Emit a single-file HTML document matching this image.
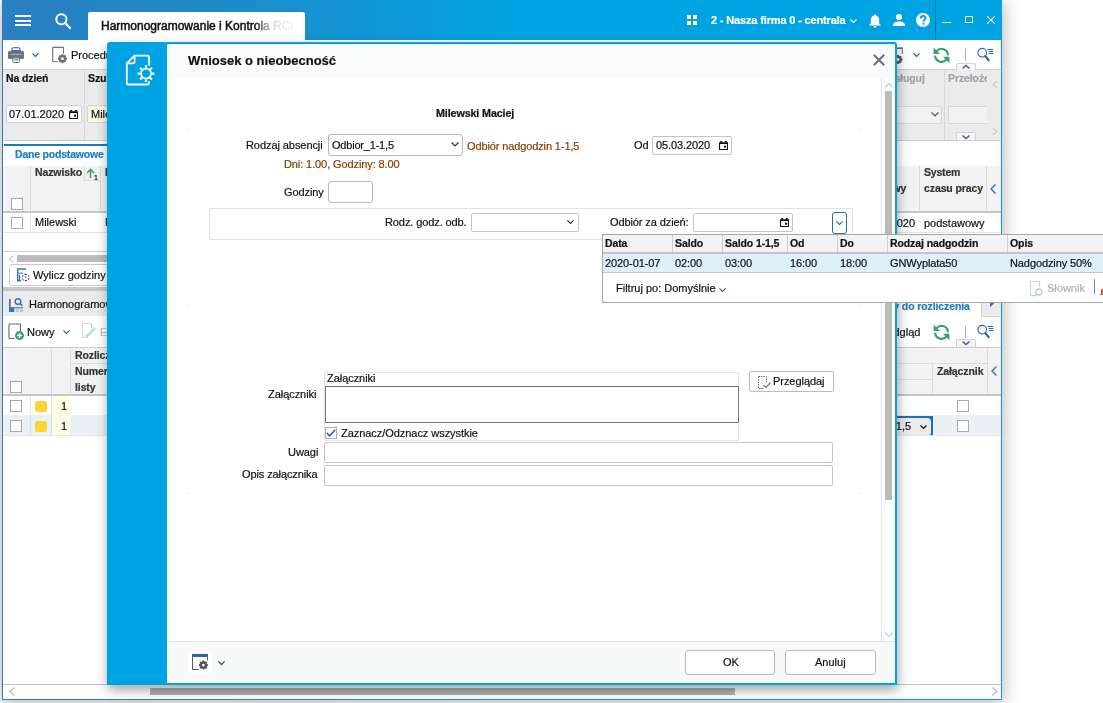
<!DOCTYPE html>
<html><head><meta charset="utf-8">
<style>
*{box-sizing:border-box;margin:0;padding:0}
html,body{width:1103px;height:703px;overflow:hidden;background:#fff;font-family:"Liberation Sans",sans-serif;font-size:11px;color:#222}
.a{position:absolute}
.t{position:absolute;white-space:nowrap;line-height:1;margin-top:-1px;will-change:transform;-webkit-text-stroke:0.2px currentColor}
.b{font-weight:bold}
.inp{position:absolute;background:#fff;border:1px solid #c9c9c9;border-radius:2px}
.chk{position:absolute;width:12px;height:12px;border:1px solid #a8a8a8;background:#fff}
svg{position:absolute;overflow:visible}
</style></head><body>

<!-- window shadow -->
<div class="a" style="left:2px;top:0;width:1000px;height:700px;box-shadow:0 2px 16px 1px rgba(0,0,0,0.30)"></div>

<!-- MAIN WINDOW -->
<div id="win" class="a" style="left:0;top:0;width:1002px;height:700px;overflow:hidden">
  <div class="a" style="left:2px;top:0;width:1000px;height:700px;background:#fff"></div>
  <!-- top bar -->
  <div class="a" style="left:2px;top:0;width:1000px;height:40px;background:linear-gradient(90deg,#2a7fc1 0px,#1d8ccc 250px,#00a3e2 520px,#00a3e2 1000px)"></div>

  <!-- hamburger -->
  <div class="a" style="left:15px;top:15px;width:16px;height:2px;background:#fff"></div>
  <div class="a" style="left:15px;top:19.5px;width:16px;height:2px;background:#fff"></div>
  <div class="a" style="left:15px;top:24px;width:16px;height:2px;background:#fff"></div>
  <!-- search -->
  <svg style="left:55px;top:13px" width="16" height="16" viewBox="0 0 16 16"><circle cx="6.4" cy="6.3" r="5.1" fill="none" stroke="#fff" stroke-width="2"/><line x1="10" y1="10" x2="15" y2="15" stroke="#fff" stroke-width="2.2" stroke-linecap="round"/></svg>
  <!-- tab -->
  <div class="a" style="left:88px;top:12px;width:217px;height:28px;background:#fff;border-radius:2px 2px 0 0"></div>
  <div class="a" style="left:88px;top:12px;width:205px;height:28px;overflow:hidden"><div class="t" style="left:12.5px;top:8.5px;font-size:12px;-webkit-text-stroke:0.5px #111;color:#111">Harmonogramowanie i Kontrola RCP</div><div class="a" style="left:168px;top:0;width:37px;height:28px;background:linear-gradient(90deg,rgba(255,255,255,0) 0px,rgba(255,255,255,0.6) 10px,rgba(255,255,255,0.88) 20px,rgba(255,255,255,0.96) 37px)"></div></div>
  <!-- grid icon -->
  <div class="a" style="left:686.5px;top:15px;width:4px;height:4px;background:#fff"></div>
  <div class="a" style="left:692.5px;top:15px;width:4px;height:4px;background:#fff"></div>
  <div class="a" style="left:686.5px;top:21px;width:4px;height:4px;background:#fff"></div>
  <div class="a" style="left:692.5px;top:21px;width:4px;height:4px;background:#fff"></div>
  <div class="t b" style="left:710.8px;top:16px;font-size:11px;letter-spacing:-0.15px;color:#fff">2 - Nasza firma 0 - centrala</div>
  <svg style="left:849.5px;top:19px" width="7" height="4" viewBox="0 0 7 4"><polyline points="0.5,0.5 3.5,3.5 6.5,0.5" fill="none" stroke="#fff" stroke-width="1.1"/></svg>
  <!-- bell -->
  <svg style="left:869px;top:13.5px" width="12" height="14" viewBox="0 0 12 14"><path d="M6 0.5c0.7 0 1 0.5 1 1 2.2 0.5 3.2 2.4 3.2 4.5v3.3l1.5 1.7v0.6H0.3v-0.6l1.5-1.7V6c0-2.1 1-4 3.2-4.5 0-0.5 0.3-1 1-1z M4.6 12h2.8c0 0.8-0.6 1.5-1.4 1.5s-1.4-0.7-1.4-1.5z" fill="#fff"/></svg>
  <!-- person -->
  <svg style="left:892px;top:14px" width="14" height="12" viewBox="0 0 14 12"><circle cx="7" cy="3" r="3.1" fill="#fff"/><path d="M0.8 12c0-3.2 2.8-4.6 6.2-4.6s6.2 1.4 6.2 4.6z" fill="#fff"/></svg>
  <!-- help -->
  <svg style="left:915.5px;top:13px" width="14" height="14" viewBox="0 0 14 14"><circle cx="7" cy="7" r="7" fill="#fff"/><path d="M4.7 5.4c0-1.4 1-2.4 2.4-2.4 1.4 0 2.4 0.9 2.4 2.1 0 1.6-1.9 1.7-1.9 3.3" fill="none" stroke="#00a3e2" stroke-width="2"/><rect x="6.5" y="9.6" width="2" height="1.9" fill="#00a3e2"/></svg>
  <div class="a" style="left:935px;top:0;width:1px;height:40px;background:#1577a8"></div>
  <div class="a" style="left:942px;top:21.5px;width:8.5px;height:1.2px;background:#fff"></div>
  <div class="a" style="left:965px;top:15.5px;width:8px;height:7.5px;border:1.2px solid #fff"></div>
  <svg style="left:987px;top:16px" width="8" height="8" viewBox="0 0 8 8"><path d="M0.3 0.3L7.7 7.7M7.7 0.3L0.3 7.7" stroke="#fff" stroke-width="1.1"/></svg>
    <!-- ===== toolbar 1 ===== -->
  <svg style="left:8px;top:47px" width="16" height="16" viewBox="0 0 16 16"><path d="M4 3.8V2.6Q4 0.6 6.2 0.6H9.8Q12 0.6 12 2.6V3.8" fill="none" stroke="#747474" stroke-width="1.2"/><rect x="0" y="4" width="16" height="8" rx="1.5" fill="#747474"/><rect x="3.2" y="3" width="9.8" height="3.8" fill="#4677bd"/><rect x="3.2" y="6.8" width="9.8" height="0.9" fill="#b4c6de"/><rect x="4.8" y="10.9" width="6.6" height="4.6" rx="0.8" fill="#fff" stroke="#747474" stroke-width="1"/><rect x="6" y="12.2" width="4.5" height="1" fill="#4a7fc0"/><rect x="6" y="13.6" width="4.5" height="0.7" fill="#b9cde6"/></svg>
  <svg style="left:32px;top:53px" width="7" height="4" viewBox="0 0 7 4"><polyline points="0.4,0.4 3.5,3.5 6.6,0.4" fill="none" stroke="#2b62a6" stroke-width="1.2"/></svg>
  <svg style="left:52px;top:47px" width="16" height="17" viewBox="0 0 16 17"><path d="M5.8 14.7H1.2Q0.7 14.7 0.7 14.2V0.9Q0.7 0.4 1.2 0.4H11Q11.5 0.4 11.5 0.9V6.4" fill="none" stroke="#707070" stroke-width="1.1"/><path d="M13.59 10.41 L14.95 10.74 L14.95 12.66 L13.59 12.99 L13.59 13.01 L14.31 14.20 L12.95 15.56 L11.76 14.84 L11.74 14.84 L11.41 16.20 L9.49 16.20 L9.16 14.84 L9.14 14.84 L7.95 15.56 L6.59 14.20 L7.31 13.01 L7.31 12.99 L5.95 12.66 L5.95 10.74 L7.31 10.41 L7.31 10.39 L6.59 9.20 L7.95 7.84 L9.14 8.56 L9.16 8.56 L9.49 7.20 L11.41 7.20 L11.74 8.56 L11.76 8.56 L12.95 7.84 L14.31 9.20 L13.59 10.39Z M9.05 11.70 a1.40 1.40 0 1 0 2.80 0 a1.40 1.40 0 1 0 -2.80 0Z" fill="#707070" fill-rule="evenodd"/></svg>
  <div class="t" style="left:71px;top:51px;font-size:11px;color:#111">Procedury</div>
  <!-- filter panel -->
  <div class="a" style="left:3px;top:69px;width:998px;height:72px;background:#ebebeb;border-top:1px solid #cfcfcf;border-bottom:1px solid #cdcdcd"></div>
  <div class="a" style="left:84px;top:70px;width:1px;height:70px;background:#d8d8d8"></div>
  <div class="t b" style="left:6px;top:74px;font-size:10.5px;letter-spacing:-0.1px;color:#111">Na dzień</div>
  <div class="t b" style="left:88px;top:74px;font-size:10.5px;letter-spacing:-0.1px;color:#111">Szukaj</div>
  <div class="inp" style="left:6px;top:105px;width:76px;height:18px;border-color:#cdcdcd"></div>
  <div class="t" style="left:9px;top:110px;font-size:11px;color:#111">07.01.2020</div>
  <svg style="left:69px;top:110px" width="10" height="9" viewBox="0 0 10 9"><path d="M0 1.2H9V9H0z M1.1 3V7.9H7.9V3z" fill="#111" fill-rule="evenodd"/><rect x="1.2" y="0" width="2" height="1.5" fill="#111"/><rect x="5.8" y="0" width="2" height="1.5" fill="#111"/><rect x="5" y="4.7" width="2" height="2" fill="#111"/></svg>
  <div class="inp" style="left:87px;top:105px;width:100px;height:18px;background:#fbf8e4;border-color:#d6d3c0"></div>
  <div class="t" style="left:91px;top:110px;font-size:11px;color:#111">Milewski</div>
  <!-- tab strip -->
  <div class="a" style="left:4px;top:144px;width:140px;height:2px;background:#1d7cc0"></div>
  <div class="t b" style="left:15px;top:150px;font-size:10.5px;letter-spacing:-0.2px;color:#1b7dc2">Dane podstawowe</div>
  <!-- grid1 header -->
  <div class="a" style="left:3px;top:165.5px;width:998px;height:47.5px;background:#f2f2f2;border-bottom:2px solid #c6c6c6"></div>
  <div class="a" style="left:30px;top:166px;width:1px;height:44px;background:#dcdcdc"></div>
  <div class="a" style="left:100px;top:166px;width:1px;height:44px;background:#dcdcdc"></div>
  <div class="chk" style="left:11px;top:198px"></div>
  <div class="t b" style="left:35px;top:168px;font-size:10.5px;letter-spacing:-0.1px;color:#333">Nazwisko</div>
  <div class="a" style="left:84px;top:166px;width:16px;height:15px;border-left:1px solid #dcdcdc;border-bottom:1px solid #dcdcdc"></div>
  <svg style="left:86px;top:168px" width="10" height="11" viewBox="0 0 10 11"><path d="M4.5 10V1.5M1 5L4.5 1.5 8 5" fill="none" stroke="#3aa76d" stroke-width="1.6"/></svg>
  <div class="t" style="left:94px;top:175px;font-size:7px;color:#111">1</div>
  <div class="t b" style="left:105px;top:168px;font-size:10.5px;letter-spacing:-0.1px;color:#333">Imię</div>
  <!-- grid1 row -->
  <div class="a" style="left:3px;top:232px;width:998px;height:1px;background:#dfe5ea"></div>
  <div class="a" style="left:29.5px;top:213px;width:1px;height:19px;background:#d9e6f2"></div>
  <div class="chk" style="left:11px;top:217px"></div>
  <div class="t" style="left:35px;top:218px;font-size:11px;color:#111">Milewski</div>
  <div class="t" style="left:105px;top:218px;font-size:11px;color:#111">Maciej</div>
  <!-- scroll 1 -->
  <div class="a" style="left:3px;top:251px;width:998px;height:1px;background:#cdcdcd"></div>
  <svg style="left:8px;top:255px" width="6" height="8" viewBox="0 0 6 8"><polyline points="5.5,0.5 1,4 5.5,7.5" fill="none" stroke="#bdbdbd" stroke-width="1"/></svg>
  <div class="a" style="left:17px;top:255px;width:200px;height:7px;background:#bcbcbc"></div>
  <!-- button wylicz -->
  <div class="inp" style="left:9px;top:264px;width:150px;height:21.5px;border-color:#c9c9c9;border-radius:3px"></div>
  <svg style="left:16px;top:267.5px" width="14" height="14" viewBox="0 0 14 14"><path d="M1 1H10M1.7 1V12.7H5" stroke="#3a74b8" stroke-width="1.4" fill="none"/><rect x="1" y="4.6" width="6" height="1.2" fill="#3a74b8"/><rect x="2.9" y="6.8" width="1.3" height="5.9" fill="#3a74b8"/><rect x="2.9" y="5.6" width="1.3" height="0.6" fill="#fff"/><rect x="6.6" y="6.4" width="6.2" height="6.2" rx="2" fill="#fff" stroke="#333" stroke-width="1" stroke-dasharray="2.2 1.1"/><rect x="9.2" y="8" width="1" height="2.2" fill="#3a74b8"/></svg>
  <div class="t" style="left:32.5px;top:271px;font-size:11px;color:#111">Wylicz godziny</div>
  <!-- splitter -->
  <div class="a" style="left:3px;top:287px;width:998px;height:4px;background:#c8c8c8"></div>
  <!-- section 2 header -->
  <div class="a" style="left:3px;top:291px;width:998px;height:25px;background:#ebebeb"></div>
  <svg style="left:8px;top:298px" width="16" height="15" viewBox="0 0 16 15"><rect x="1" y="1" width="1.7" height="13" fill="#3a74b8"/><rect x="1" y="9.2" width="14" height="1.1" fill="#3a74b8"/><rect x="1" y="10" width="5.3" height="4" fill="#3a74b8"/><circle cx="10" cy="3.6" r="2.8" fill="none" stroke="#3a74b8" stroke-width="1.5"/><path d="M12 5.6L14.3 7.6" stroke="#3a74b8" stroke-width="1.8"/><rect x="8" y="11" width="3" height="3" fill="#c4c4c4"/><rect x="12" y="11" width="3" height="3" fill="#c4c4c4"/></svg>
  <div class="t" style="left:28.7px;top:299.5px;font-size:11px;color:#111">Harmonogramowanie</div>
  <!-- toolbar 2 -->
  <svg style="left:8px;top:323px" width="17" height="18" viewBox="0 0 17 18"><path d="M6.5 15.5H1.5Q1 15.5 1 15V1.5Q1 1 1.5 1H12Q12.5 1 12.5 1.5V8" fill="none" stroke="#666" stroke-width="1.1"/><circle cx="11.5" cy="12.6" r="4.5" fill="#3d9f6f"/><path d="M11.5 10.2V15M9.1 12.6H13.9" stroke="#fff" stroke-width="1.5"/></svg>
  <div class="t" style="left:26.5px;top:327.5px;font-size:11px;color:#111">Nowy</div>
  <svg style="left:63px;top:330px" width="7" height="4" viewBox="0 0 7 4"><polyline points="0.4,0.4 3.5,3.5 6.6,0.4" fill="none" stroke="#2b62a6" stroke-width="1.2"/></svg>
  <svg style="left:82px;top:323px" width="15" height="16" viewBox="0 0 15 16"><path d="M6 14.5H0.5V0.5H9.5V5" fill="none" stroke="#d6d6d6" stroke-width="1"/><path d="M4 14L13 5" stroke="#c5d7ea" stroke-width="2.6"/></svg>
  <div class="t" style="left:100px;top:327.5px;font-size:11px;color:#bdbdbd">Edytuj</div>
  <!-- grid2 header -->
  <div class="a" style="left:3px;top:347px;width:998px;height:49px;background:#f2f2f2;border-top:1px solid #cdcdcd;border-bottom:2px solid #c6c6c6"></div>
  <div class="a" style="left:51px;top:348px;width:1px;height:46px;background:#dcdcdc"></div>
  <div class="a" style="left:70px;top:348px;width:1px;height:46px;background:#dcdcdc"></div>
  <div class="a" style="left:71px;top:363px;width:916px;height:1px;background:#dcdcdc"></div>
  <div class="a" style="left:800px;top:379px;width:132px;height:1px;background:#dcdcdc"></div>
  <div class="chk" style="left:10px;top:381px"></div>
  <div class="t b" style="left:75px;top:351px;font-size:10.5px;letter-spacing:-0.1px;color:#333">Rozliczenie</div>
  <div class="t b" style="left:75px;top:367px;font-size:10.5px;letter-spacing:-0.1px;color:#333">Numer</div>
  <div class="t b" style="left:75px;top:383px;font-size:10.5px;letter-spacing:-0.1px;color:#333">listy</div>
  <!-- grid2 rows -->
  <div class="a" style="left:3px;top:415px;width:998px;height:20px;background:#e9f0f6"></div>
  <div class="a" style="left:52px;top:396px;width:19px;height:39px;background:#fdfce4"></div>
  <div class="a" style="left:29.5px;top:396px;width:1px;height:39px;background:#d9e6f2"></div>
  <div class="a" style="left:51px;top:396px;width:1px;height:39px;background:#d9e6f2"></div>
  <div class="a" style="left:3px;top:435px;width:998px;height:1px;background:#e6e6e6"></div>
  <div class="chk" style="left:10px;top:400px"></div>
  <div class="chk" style="left:10px;top:420px"></div>
  <div class="a" style="left:35px;top:401px;width:12px;height:11px;background:#fdd435;border-radius:2px"></div>
  <div class="a" style="left:35px;top:421px;width:12px;height:11px;background:#fdd435;border-radius:2px"></div>
  <div class="t" style="left:61px;top:401.5px;font-size:11px;color:#111">1</div>
  <div class="t" style="left:61px;top:421.5px;font-size:11px;color:#111">1</div>
  <!-- bottom scroll -->
  <div class="a" style="left:3px;top:684px;width:998px;height:1px;background:#c2c2c2"></div>
  <svg style="left:9px;top:687px" width="6" height="9" viewBox="0 0 6 9"><polyline points="5.5,0.5 1,4.5 5.5,8.5" fill="none" stroke="#bdbdbd" stroke-width="1.3"/></svg>
  <div class="a" style="left:150px;top:688px;width:585px;height:7px;background:#b2b2b2"></div>
  <svg style="left:992px;top:687px" width="6" height="9" viewBox="0 0 6 9"><polyline points="0.5,0.5 5,4.5 0.5,8.5" fill="none" stroke="#bdbdbd" stroke-width="1.3"/></svg>
    <!-- ===== right portion ===== -->
  <svg style="left:893px;top:47px" width="11" height="17" viewBox="0 0 11 17"><path d="M0 1.2H9.7" fill="none" stroke="#3a6fb5" stroke-width="1.6"/><path d="M9.3 1.5V7" stroke="#707070" stroke-width="1.1"/><path d="M8.14 11.21 L9.50 11.54 L9.50 13.46 L8.14 13.79 L8.14 13.81 L8.86 15.00 L7.50 16.36 L6.31 15.64 L6.29 15.64 L5.96 17.00 L4.04 17.00 L3.71 15.64 L3.69 15.64 L2.50 16.36 L1.14 15.00 L1.86 13.81 L1.86 13.79 L0.50 13.46 L0.50 11.54 L1.86 11.21 L1.86 11.19 L1.14 10.00 L2.50 8.64 L3.69 9.36 L3.71 9.36 L4.04 8.00 L5.96 8.00 L6.29 9.36 L6.31 9.36 L7.50 8.64 L8.86 10.00 L8.14 11.19Z M3.60 12.50 a1.40 1.40 0 1 0 2.80 0 a1.40 1.40 0 1 0 -2.80 0Z" fill="#5a5a5a" fill-rule="evenodd"/></svg>
  <svg style="left:913px;top:53px" width="7" height="4" viewBox="0 0 7 4"><polyline points="0.4,0.4 3.5,3.5 6.6,0.4" fill="none" stroke="#2b62a6" stroke-width="1.2"/></svg>
  <svg style="left:932.5px;top:46.5px" width="17" height="17" viewBox="0 0 17 17"><path d="M3.6 4.1A6.4 6.4 0 0 1 14.9 8.4" fill="none" stroke="#36a26a" stroke-width="2.1"/><path d="M2.1 8.6A6.4 6.4 0 0 0 13.4 12.5" fill="none" stroke="#36a26a" stroke-width="2.1"/><path d="M0.6 0.6V7H7z" fill="#36a26a"/><path d="M16.4 16.2V9.8H10z" fill="#36a26a"/></svg>
  <div class="a" style="left:965px;top:49px;width:1px;height:12px;background:#adadad"></div>
  <svg style="left:977px;top:48px" width="17" height="15" viewBox="0 0 17 15"><circle cx="5.2" cy="4.7" r="4.3" fill="none" stroke="#2f67ad" stroke-width="1.1"/><path d="M8.4 8.1L11.6 12.1" stroke="#2f67ad" stroke-width="2.3" stroke-linecap="round"/><path d="M10.3 1.5H16.3M11.6 3.5H16.3M11.8 5.5H16.3" stroke="#2f67ad" stroke-width="1"/></svg>
  <div class="a" style="left:956px;top:62.5px;width:20px;height:7px;background:#f7f7f7;border:1px solid #d2d2d2;border-bottom:none;border-radius:2px 2px 0 0"></div>
  <svg style="left:962px;top:64.5px" width="8" height="4" viewBox="0 0 8 4"><polyline points="0.5,3.5 4,0.5 7.5,3.5" fill="none" stroke="#2b62a6" stroke-width="1.5"/></svg>
  <!-- panel right -->
  <div class="t b" style="left:880px;top:74px;font-size:10.5px;letter-spacing:-0.1px;color:#a4a4a4">Obsługuj</div>
  <div class="a" style="left:944px;top:70px;width:1px;height:70px;background:#d8d8d8"></div>
  <div class="a" style="left:988px;top:70px;width:13px;height:70px;background:#ebebeb"></div>
  <div class="t b" style="left:948px;top:74px;font-size:10.5px;letter-spacing:-0.1px;color:#a4a4a4">Przełożony</div>
  <div class="a" style="left:987px;top:70px;width:14px;height:70px;background:#ebebeb"></div>
  <svg style="left:992px;top:80.5px" width="6" height="7" viewBox="0 0 6 7"><polyline points="5.2,0.3 0.8,3.5 5.2,6.7" fill="none" stroke="#bdbdbd" stroke-width="1"/></svg>
  <svg style="left:992px;top:128px" width="6" height="7" viewBox="0 0 6 7"><polyline points="0.8,0.3 5.2,3.5 0.8,6.7" fill="none" stroke="#bdbdbd" stroke-width="1"/></svg>
  <div class="inp" style="left:860px;top:105.5px;width:81.5px;height:18px;background:#f2f2f2;border-color:#d6d6d6"></div>
  <svg style="left:931px;top:112px" width="8" height="5" viewBox="0 0 8 5"><polyline points="0.5,0.5 4,4 7.5,0.5" fill="none" stroke="#555" stroke-width="1.1"/></svg>
  <div class="a" style="left:947.5px;top:105.5px;width:39px;height:18px;background:#f2f2f2;border:1px solid #d6d6d6;border-right:none;border-radius:2px 0 0 2px"></div>
  <div class="a" style="left:956px;top:132px;width:20px;height:8px;background:#f7f7f7;border:1px solid #d2d2d2;border-bottom:none;border-radius:2px 2px 0 0"></div>
  <svg style="left:962px;top:134.5px" width="8" height="4" viewBox="0 0 8 4"><polyline points="0.5,0.5 4,3.5 7.5,0.5" fill="none" stroke="#2b62a6" stroke-width="1.5"/></svg>
  <!-- grid1 header right -->
  <div class="a" style="left:919px;top:166px;width:1px;height:44px;background:#dcdcdc"></div>
  <div class="a" style="left:986px;top:166px;width:1px;height:44px;background:#dcdcdc"></div>
  <div class="t b" style="left:841px;top:184px;font-size:10.5px;letter-spacing:-0.1px;color:#333">Czas etatowy</div>
  <div class="t b" style="left:924px;top:168px;font-size:10.5px;letter-spacing:-0.2px;color:#333">System</div>
  <div class="t b" style="left:924px;top:184px;font-size:10.5px;letter-spacing:-0.1px;color:#333">czasu pracy</div>
  <svg style="left:990px;top:184px" width="6" height="10" viewBox="0 0 6 10"><polyline points="5.5,0.5 1,5 5.5,9.5" fill="none" stroke="#2f6fb5" stroke-width="1.3"/></svg>
  <div class="t" style="left:860px;top:218.5px;font-size:11px;color:#111">07.01.2020</div>
  <div class="t" style="left:924px;top:218.5px;font-size:11px;color:#111">podstawowy</div>
  <!-- section 2 right -->
  <div class="a" style="left:880px;top:296px;width:101px;height:20px;background:#fff"></div>
  <div class="t b" style="left:875px;top:302px;font-size:10.5px;letter-spacing:-0.1px;color:#1b7dc2">Listy do rozliczenia</div>
  <div class="a" style="left:981px;top:291px;width:20px;height:26px;background:#ebebeb;border-left:1px solid #cfcfcf;border-bottom:1px solid #d6d6d6"></div>
  <svg style="left:990px;top:303px" width="5" height="5" viewBox="0 0 5 5"><path d="M0 0H4.3L0 4.3z" fill="#3a6aa8"/></svg>
  <div class="t" style="left:879.5px;top:327.5px;font-size:11px;color:#111">Podgląd</div>
  <svg style="left:932.5px;top:323.5px" width="17" height="17" viewBox="0 0 17 17"><path d="M3.6 4.1A6.4 6.4 0 0 1 14.9 8.4" fill="none" stroke="#36a26a" stroke-width="2.1"/><path d="M2.1 8.6A6.4 6.4 0 0 0 13.4 12.5" fill="none" stroke="#36a26a" stroke-width="2.1"/><path d="M0.6 0.6V7H7z" fill="#36a26a"/><path d="M16.4 16.2V9.8H10z" fill="#36a26a"/></svg>
  <div class="a" style="left:965px;top:326px;width:1px;height:12px;background:#adadad"></div>
  <svg style="left:977px;top:325px" width="17" height="15" viewBox="0 0 17 15"><circle cx="5.2" cy="4.7" r="4.3" fill="none" stroke="#2f67ad" stroke-width="1.1"/><path d="M8.4 8.1L11.6 12.1" stroke="#2f67ad" stroke-width="2.3" stroke-linecap="round"/><path d="M10.3 1.5H16.3M11.6 3.5H16.3M11.8 5.5H16.3" stroke="#2f67ad" stroke-width="1"/></svg>
  <div class="a" style="left:956px;top:339px;width:20px;height:8px;background:#f3f3f3;border:1px solid #d2d2d2;border-bottom:none;border-radius:2px 2px 0 0"></div>
  <svg style="left:962px;top:341px" width="8" height="4" viewBox="0 0 8 4"><polyline points="0.5,0.5 4,3.5 7.5,0.5" fill="none" stroke="#2b62a6" stroke-width="1.5"/></svg>
  <!-- grid2 header right -->
  <div class="a" style="left:932px;top:364px;width:1px;height:30px;background:#dcdcdc"></div>
  <div class="a" style="left:987px;top:348px;width:1px;height:46px;background:#dcdcdc"></div>
  <div class="t b" style="left:937px;top:367px;font-size:10.5px;letter-spacing:-0.1px;color:#333">Załącznik</div>
  <svg style="left:991px;top:366px" width="6" height="10" viewBox="0 0 6 10"><polyline points="5.5,0.5 1,5 5.5,9.5" fill="none" stroke="#2f6fb5" stroke-width="1.3"/></svg>
  <div class="chk" style="left:957px;top:400px"></div>
  <div class="chk" style="left:957px;top:420px"></div>
  <div class="a" style="left:860px;top:416px;width:73px;height:19px;background:#1a73b8"></div><div class="a" style="left:860px;top:418px;width:71px;height:17px;background:#ebebeb;border-radius:0 4px 2px 0"></div>
  <div class="t" style="left:886px;top:421.5px;font-size:11px;color:#111">1-1,5</div>
  <svg style="left:920px;top:424.5px" width="7" height="4" viewBox="0 0 7 4"><polyline points="0.5,0.5 3.5,3.2 6.5,0.5" fill="none" stroke="#222" stroke-width="1.4"/></svg>

</div>

<!-- window borders -->
<div class="a" style="left:2px;top:40px;width:1px;height:660px;background:#2a7fc1"></div>
<div class="a" style="left:1001px;top:40px;width:1px;height:660px;background:#00a3e2"></div>
<div class="a" style="left:2px;top:699px;width:1000px;height:1px;background:linear-gradient(90deg,#2a7fc1 0px,#1d8ccc 250px,#00a3e2 520px,#00a3e2 1000px)"></div>

<!-- DIALOG -->
<div class="a" style="left:107px;top:42px;width:790px;height:643px;background:#00a3e2;border-radius:3px 3px 0 0;box-shadow:1px 5px 12px rgba(0,0,0,0.36)"></div>
<div class="a" style="left:167px;top:44px;width:728px;height:639px;background:#fff;border-radius:2px 2px 1px 1px;overflow:hidden">
  <div class="a" style="left:0;top:0;width:728px;height:34px;background:#f9fafa"></div>
  <div class="a" style="left:0;top:597px;width:728px;height:42px;background:#f8f9f9;border-top:1px solid #e3e5e5"></div>
</div>
<!-- dialog icon -->
<svg style="left:125px;top:54px" width="32" height="32" viewBox="0 0 32 32"><path d="M24 11.5V3.4Q24 1.6 22.2 1.6H9.6L1.8 9.3V28.8Q1.8 30.5 3.5 30.5H22.3Q24 30.5 24 28.8V27.2" fill="none" stroke="#fff" stroke-width="1.8"/><path d="M9.6 1.6V7.6Q9.6 9.3 7.9 9.3H1.8" fill="none" stroke="#fff" stroke-width="1.8"/><circle cx="21.0" cy="19.6" r="5" fill="none" stroke="#fff" stroke-width="1.9"/><path d="M26.90 19.60L29.40 19.60M25.17 23.77L26.94 25.54M21.00 25.50L21.00 28.00M16.83 23.77L15.06 25.54M15.10 19.60L12.60 19.60M16.83 15.43L15.06 13.66M21.00 13.70L21.00 11.20M25.17 15.43L26.94 13.66" stroke="#fff" stroke-width="2.2"/></svg>
<div class="t b" style="left:187.5px;top:55px;font-size:13px;letter-spacing:0px;color:#111">Wniosek o nieobecność</div>
<svg style="left:873px;top:54px" width="12" height="12" viewBox="0 0 12 12"><path d="M0.8 0.8L11.2 11.2M11.2 0.8L0.8 11.2" stroke="#707070" stroke-width="2"/></svg>
<!-- scrollbar -->
<div class="a" style="left:881px;top:78px;width:1px;height:563px;background:#e4e4e4"></div>
<svg style="left:885px;top:83px" width="8" height="5" viewBox="0 0 8 5"><polyline points="0.3,4.3 4,0.6 7.7,4.3" fill="none" stroke="#c3c3c3" stroke-width="1.1"/></svg>
<div class="a" style="left:885px;top:91px;width:7px;height:409px;background:#bababa"></div>
<svg style="left:885px;top:632px" width="8" height="5" viewBox="0 0 8 5"><polyline points="0.3,0.6 4,4.3 7.7,0.6" fill="none" stroke="#c3c3c3" stroke-width="1.1"/></svg>
<!-- dots -->
<div class="a" style="left:187px;top:129px;width:1px;height:1px;background:#ccc"></div>
<div class="a" style="left:860px;top:129px;width:1px;height:1px;background:#ccc"></div>
<div class="a" style="left:187px;top:493px;width:1px;height:1px;background:#ccc"></div>
<div class="a" style="left:187px;top:305px;width:1px;height:1px;background:#ddd"></div>
<div class="a" style="left:860px;top:305px;width:1px;height:1px;background:#ddd"></div>
<div class="a" style="left:860px;top:493px;width:1px;height:1px;background:#ccc"></div>
<!-- form -->
<div class="t b" style="left:436px;top:109px;font-size:10.8px;letter-spacing:-0.15px;color:#111">Milewski Maciej</div>
<div class="t" style="left:246.3px;top:141px;font-size:11px;letter-spacing:-0.07px;color:#111">Rodzaj absencji</div>
<div class="inp" style="left:328px;top:134px;width:135px;height:22px;border-color:#b9b9b9;border-radius:3px"></div>
<div class="t" style="left:332px;top:141px;font-size:11px;letter-spacing:-0.2px;color:#111">Odbior_1-1,5</div>
<svg style="left:451px;top:142px" width="8" height="5" viewBox="0 0 8 5"><polyline points="0.5,0.5 4,4 7.5,0.5" fill="none" stroke="#333" stroke-width="1.2"/></svg>
<div class="t" style="left:467.4px;top:141.5px;font-size:11px;letter-spacing:-0.12px;color:#804000">Odbiór nadgodzin 1-1,5</div>
<div class="t" style="left:633.5px;top:140.7px;font-size:11px;color:#111">Od</div>
<div class="inp" style="left:652px;top:136px;width:80px;height:19px;border-color:#c4c4c4;border-radius:2px"></div>
<div class="t" style="left:656px;top:140.5px;font-size:11px;letter-spacing:-0.1px;color:#111">05.03.2020</div>
<svg style="left:719px;top:141px" width="10" height="9" viewBox="0 0 10 9"><path d="M0 1.2H9V9H0z M1.1 3V7.9H7.9V3z" fill="#111" fill-rule="evenodd"/><rect x="1.2" y="0" width="2" height="1.5" fill="#111"/><rect x="5.8" y="0" width="2" height="1.5" fill="#111"/><rect x="5" y="4.7" width="2" height="2" fill="#111"/></svg>
<div class="t" style="left:284.4px;top:159.5px;font-size:11px;letter-spacing:-0.1px;color:#804000">Dni: 1.00, Godziny: 8.00</div>
<div class="t" style="left:283.7px;top:187.5px;font-size:11px;letter-spacing:-0.1px;color:#111">Godziny</div>
<div class="inp" style="left:328px;top:181px;width:45px;height:21.5px;border-color:#b9b9b9;border-radius:3px"></div>
<!-- box -->
<div class="a" style="left:209px;top:208px;width:644px;height:32px;border:1px solid #e2e2e2"></div>
<div class="t" style="left:385px;top:218px;font-size:11px;letter-spacing:-0.1px;color:#111">Rodz. godz. odb.</div>
<div class="inp" style="left:471px;top:213px;width:108px;height:18.5px;border-color:#c4c4c4;border-radius:2px"></div>
<svg style="left:567px;top:220px" width="7" height="4" viewBox="0 0 7 4"><polyline points="0.4,0.4 3.5,3.5 6.6,0.4" fill="none" stroke="#333" stroke-width="1.2"/></svg>
<div class="t" style="left:610px;top:218px;font-size:11px;letter-spacing:-0.1px;color:#111">Odbiór za dzień:</div>
<div class="inp" style="left:693px;top:213px;width:100px;height:18.5px;border-color:#c4c4c4;border-radius:2px"></div>
<svg style="left:780px;top:217.5px" width="10" height="9" viewBox="0 0 10 9"><path d="M0 1.2H9V9H0z M1.1 3V7.9H7.9V3z" fill="#111" fill-rule="evenodd"/><rect x="1.2" y="0" width="2" height="1.5" fill="#111"/><rect x="5.8" y="0" width="2" height="1.5" fill="#111"/><rect x="5" y="4.7" width="2" height="2" fill="#111"/></svg>
<div class="a" style="left:832px;top:212px;width:15px;height:22px;border:1.5px solid #1f6db0;border-radius:3px;background:#fff"></div>
<svg style="left:836px;top:221px" width="7" height="4" viewBox="0 0 7 4"><polyline points="0.4,0.4 3.5,3.5 6.6,0.4" fill="none" stroke="#1f6db0" stroke-width="1.1"/></svg>
<!-- attachments -->
<div class="t" style="left:268.3px;top:389.5px;font-size:11px;letter-spacing:-0.05px;color:#111">Załączniki</div>
<div class="a" style="left:324px;top:371.5px;width:415px;height:69px;border:1px solid #e4e4e4"></div>
<div class="t" style="left:327px;top:374px;font-size:11px;letter-spacing:-0.05px;color:#111">Załączniki</div>
<div class="a" style="left:324.5px;top:385.5px;width:414px;height:37.5px;border:1.5px solid #777;background:#fff"></div>
<div class="a" style="left:325px;top:427px;width:12px;height:12px;border:1px solid #b0b0b0;background:#fff"></div>
<svg style="left:326px;top:429px" width="10" height="8" viewBox="0 0 10 8"><polyline points="0.8,4 3.5,6.8 9.3,0.8" fill="none" stroke="#2a5fa5" stroke-width="1.5"/></svg>
<div class="t" style="left:341px;top:429px;font-size:11px;letter-spacing:-0.05px;color:#111">Zaznacz/Odznacz wszystkie</div>
<div class="a" style="left:749px;top:371px;width:84.5px;height:20.5px;border:1px solid #bdbdbd;border-radius:2px;background:#fff"></div>
<svg style="left:758px;top:376px" width="13" height="13" viewBox="0 0 13 13"><path d="M0.5 0.5H8.5V6M0.5 0.5V12.5H5" fill="none" stroke="#666" stroke-width="1" stroke-dasharray="1.5 1"/><polyline points="5.5,9 8,11.5 12.5,6.5" fill="none" stroke="#3aa76d" stroke-width="1.3"/></svg>
<div class="t" style="left:773px;top:376.5px;font-size:11px;letter-spacing:-0.05px;color:#111">Przeglądaj</div>
<div class="t" style="left:287.9px;top:448px;font-size:11px;letter-spacing:-0.05px;color:#111">Uwagi</div>
<div class="inp" style="left:323.5px;top:441.5px;width:509px;height:21px;border-color:#c4c4c4;border-radius:2px"></div>
<div class="t" style="left:241.7px;top:470px;font-size:11px;letter-spacing:-0.1px;color:#111">Opis załącznika</div>
<div class="inp" style="left:323.5px;top:464.6px;width:509px;height:21.2px;border-color:#c4c4c4;border-radius:2px"></div>
<!-- footer -->
<div class="a" style="left:188px;top:652.5px;width:24px;height:20px;background:#fff;border-radius:3px"></div><svg style="left:191px;top:654px" width="18" height="17" viewBox="0 0 18 17"><rect x="1" y="0" width="16" height="3" fill="#2f62ad"/><path d="M1.5 3V15.5H7.7" fill="none" stroke="#5a5a5a" stroke-width="1"/><path d="M16.5 3V6.2" stroke="#5a5a5a" stroke-width="1"/><path d="M15.54 9.81 L16.90 10.14 L16.90 12.06 L15.54 12.39 L15.54 12.41 L16.26 13.60 L14.90 14.96 L13.71 14.24 L13.69 14.24 L13.36 15.60 L11.44 15.60 L11.11 14.24 L11.09 14.24 L9.90 14.96 L8.54 13.60 L9.26 12.41 L9.26 12.39 L7.90 12.06 L7.90 10.14 L9.26 9.81 L9.26 9.79 L8.54 8.60 L9.90 7.24 L11.09 7.96 L11.11 7.96 L11.44 6.60 L13.36 6.60 L13.69 7.96 L13.71 7.96 L14.90 7.24 L16.26 8.60 L15.54 9.79Z M11.00 11.10 a1.40 1.40 0 1 0 2.80 0 a1.40 1.40 0 1 0 -2.80 0Z" fill="#555" fill-rule="evenodd"/></svg>
<svg style="left:218px;top:661px" width="7" height="4" viewBox="0 0 7 4"><polyline points="0.4,0.4 3.5,3.5 6.6,0.4" fill="none" stroke="#2a5595" stroke-width="1.3"/></svg>
<div class="a" style="left:685px;top:650px;width:90px;height:25px;border:1px solid #b9b9b9;border-radius:3px;background:#fff"></div>
<div class="t" style="left:722.5px;top:657.5px;font-size:11px;color:#111">OK</div>
<div class="a" style="left:785px;top:650px;width:90.5px;height:25px;border:1px solid #b9b9b9;border-radius:3px;background:#fff"></div>
<div class="t" style="left:814.5px;top:657.5px;font-size:11px;color:#111">Anuluj</div>
<!-- POPUP -->
<div class="a" style="left:602px;top:234px;width:510px;height:69px;background:#fff;border:1px solid #a8a8a8"></div>
<div class="a" style="left:603px;top:235px;width:510px;height:19px;background:#f3f3f3;border-bottom:2px solid #c4c4c4"></div>
<div class="a" style="left:603px;top:254px;width:510px;height:19px;background:#dcf0fa;border-bottom:1px solid #c6c6c6"></div>
<div class="a" style="left:672px;top:235px;width:1px;height:17px;background:#d0d0d0"></div>
<div class="a" style="left:722px;top:235px;width:1px;height:17px;background:#d0d0d0"></div>
<div class="a" style="left:787px;top:235px;width:1px;height:17px;background:#d0d0d0"></div>
<div class="a" style="left:837px;top:235px;width:1px;height:17px;background:#d0d0d0"></div>
<div class="a" style="left:887px;top:235px;width:1px;height:17px;background:#d0d0d0"></div>
<div class="a" style="left:1007px;top:235px;width:1px;height:17px;background:#d0d0d0"></div>
<div class="t b" style="left:605px;top:239px;font-size:10.5px;letter-spacing:-0.1px;color:#111">Data</div>
<div class="t b" style="left:675px;top:239px;font-size:10.5px;letter-spacing:-0.1px;color:#111">Saldo</div>
<div class="t b" style="left:725px;top:239px;font-size:10.5px;letter-spacing:-0.1px;color:#111">Saldo 1-1,5</div>
<div class="t b" style="left:790px;top:239px;font-size:10.5px;letter-spacing:-0.1px;color:#111">Od</div>
<div class="t b" style="left:840px;top:239px;font-size:10.5px;letter-spacing:-0.1px;color:#111">Do</div>
<div class="t b" style="left:890px;top:239px;font-size:10.5px;letter-spacing:-0.1px;color:#111">Rodzaj nadgodzin</div>
<div class="t b" style="left:1010px;top:239px;font-size:10.5px;letter-spacing:-0.1px;color:#111">Opis</div>
<div class="t" style="left:605px;top:259px;font-size:11px;letter-spacing:-0.1px;color:#111">2020-01-07</div>
<div class="t" style="left:675px;top:259px;font-size:11px;letter-spacing:-0.1px;color:#111">02:00</div>
<div class="t" style="left:725px;top:259px;font-size:11px;letter-spacing:-0.1px;color:#111">03:00</div>
<div class="t" style="left:790px;top:259px;font-size:11px;letter-spacing:-0.1px;color:#111">16:00</div>
<div class="t" style="left:840px;top:259px;font-size:11px;letter-spacing:-0.1px;color:#111">18:00</div>
<div class="t" style="left:890px;top:259px;font-size:11px;letter-spacing:-0.1px;color:#111">GNWyplata50</div>
<div class="t" style="left:1010px;top:259px;font-size:11px;letter-spacing:-0.1px;color:#111">Nadgodziny 50%</div>
<div class="t" style="left:616px;top:284px;font-size:11px;letter-spacing:0px;color:#111">Filtruj po: Domyślnie</div>
<svg style="left:718.5px;top:287.5px" width="7" height="4" viewBox="0 0 7 4"><polyline points="0.4,0.4 3.5,3.5 6.6,0.4" fill="none" stroke="#2b62a6" stroke-width="1.1"/></svg>
<svg style="left:1030px;top:281px" width="14" height="16" viewBox="0 0 14 16"><path d="M5 14.5H0.5V0.5H9.5V6" fill="none" stroke="#d0d0d0" stroke-width="1"/><circle cx="9" cy="11" r="3" fill="none" stroke="#b9cde3" stroke-width="1.3"/><path d="M7 13L4.5 15.5" stroke="#b9cde3" stroke-width="1.5"/></svg>
<div class="t" style="left:1047px;top:284px;font-size:11px;letter-spacing:0px;color:#b3b3b3">Słownik</div>
<div class="a" style="left:1094px;top:279px;width:1px;height:15px;background:#888"></div>
<div class="a" style="left:1100.5px;top:288.5px;width:3px;height:5px;background:#d9542a;border-radius:1px 0 0 1px"></div><div class="a" style="left:1100px;top:294px;width:3px;height:1px;background:#777"></div>


</body></html>
